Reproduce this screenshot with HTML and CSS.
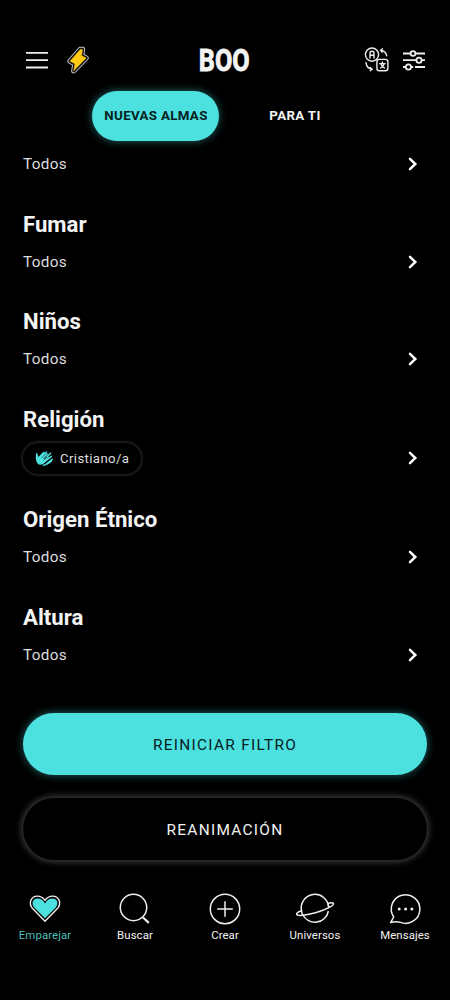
FILE: index.html
```html
<!DOCTYPE html>
<html lang="es">
<head>
<meta charset="utf-8">
<meta name="viewport" content="width=device-width, initial-scale=1">
<title>Boo</title>
<link rel="stylesheet" href="styles.css">
</head>
<body>
<svg class="defs" width="0" height="0">
  <symbol id="chevron" viewBox="0 0 12 16"><path d="M3 2.8 8.3 8 3 13.2" fill="none" stroke="#fff" stroke-width="2.5" stroke-linecap="round" stroke-linejoin="miter"/></symbol>
</svg>
<div class="app">
  <header class="topbar">
    <div class="side">
      <svg class="menu" width="24" height="30" viewBox="0 0 24 30"><path d="M1 7.8h22M1 15.2h22M1 22.5h22" stroke="#eee" stroke-width="1.8"/></svg>
      <svg class="bolt" width="26" height="30" viewBox="0 0 26 30">
        <path d="M15.2 4.4 5 16.2l4.9 2.6-1.1 7L21.2 13l-4.6-2.3.9-6.3z" fill="none" stroke="#ccc" stroke-width="5.2" stroke-linejoin="round"/>
        <path d="M15.2 4.4 5 16.2l4.9 2.6-1.1 7L21.2 13l-4.6-2.3.9-6.3z" fill="#ffc915" stroke="#0b0b0b" stroke-width="3.3" stroke-linejoin="round"/>
        <path d="M15.2 4.4 5 16.2l4.9 2.6-1.1 7L21.2 13l-4.6-2.3.9-6.3z" fill="#ffc915" stroke="#ffc915" stroke-width=".5"/>
      </svg>
    </div>
    <div class="logo">BOO</div>
    <div class="side end">
      <svg width="26" height="28" viewBox="0 0 26 28" fill="none" stroke="#eee" stroke-width="1.4" stroke-linecap="round" stroke-linejoin="round">
        <circle cx="8" cy="8.6" r="6.6"/>
        <path d="M6 12V7.2Q6 5.3 8 5.3t2 1.9V12M6 9.3h4"/>
        <rect x="12.9" y="13.4" width="11" height="11.3" rx="2.5"/>
        <path d="M15.8 17.6h5.3M18.4 16v1.6M19.9 17.8q0 2.5-3.3 4.2M17 17.8q.3 2.5 3.6 4.2"/>
        <path d="M16.5 4.2q5 .3 6.2 5.5M16.5 4.2l2-1.5M16.5 4.2l1.5 2M2 16.8q.7 5.6 6.2 6.5M8.2 23.3l-2-1.8M8.2 23.3l-1.9 1.4"/>
      </svg>
      <svg width="24" height="28" viewBox="0 0 24 28" fill="none" stroke="#eee" stroke-width="1.8">
        <path d="M1 7.5h7.6M13.4 7.5H23M1 14.2h13.5M19.6 14.2H23M1 21h2.8M9 21h2.2M13 21h10"/>
        <circle cx="11" cy="7.5" r="2.4"/><circle cx="17" cy="14.2" r="2.6"/><circle cx="6.4" cy="21" r="2.6"/>
      </svg>
    </div>
  </header>
  <nav class="tabs">
    <button class="tab active">NUEVAS ALMAS</button>
    <button class="tab">PARA TI</button>
  </nav>
  <main class="filters">
    <section class="filter"><div class="row"><span>Todos</span><svg class="chev"><use href="#chevron"/></svg></div></section>
    <section class="filter"><h2>Fumar</h2><div class="row"><span>Todos</span><svg class="chev"><use href="#chevron"/></svg></div></section>
    <section class="filter"><h2>Niños</h2><div class="row"><span>Todos</span><svg class="chev"><use href="#chevron"/></svg></div></section>
    <section class="filter"><h2>Religión</h2><div class="row chips">
      <span class="chip">
        <svg width="19" height="17" viewBox="0 0 19 17">
          <path d="M1 3.2Q2.2 2.3 2.6 4.2L3.3 7 8.2 2q1.2-.8 1.3.5l1.7-1.1q1.3-.2.9 1l-1 1.5 1.5-.6q1 .2.4 1.2L8.4 10.2l4.8-3.5q1.2 0 .7 1.1L7.6 14q-3 1.9-5.2-.8Q.8 11.2.8 8z" fill="#4ce0df"/>
          <path d="M8.5 15.2q1.6 0 2.9-1.2l5.7-4.7M7.5 13.5l8.8-7.2M12 6.7l3.5-3.4M12.4 13.9l4.1-2.8" fill="none" stroke="#4ce0df" stroke-width="1.6" stroke-linecap="round"/>
          <path d="m6.8 7.7 4-4.2M8 9l4.5-4" stroke="#0b3a3a" stroke-width=".6"/>
        </svg>
        Cristiano/a
      </span><svg class="chev"><use href="#chevron"/></svg></div></section>
    <section class="filter"><h2>Origen Étnico</h2><div class="row"><span>Todos</span><svg class="chev"><use href="#chevron"/></svg></div></section>
    <section class="filter"><h2>Altura</h2><div class="row"><span>Todos</span><svg class="chev"><use href="#chevron"/></svg></div></section>
  </main>
  <div class="actions">
    <button class="action primary">REINICIAR FILTRO</button>
    <button class="action outline">REANIMACIÓN</button>
  </div>
  <nav class="bottom">
    <a class="item current">
      <svg viewBox="0 0 40 34"><path d="M20 29.2 7.6 16.6C2.9 11.3 6.2 4.1 12.2 4.1c3.6 0 6.2 1.8 7.8 4.2 1.6-2.4 4.2-4.2 7.8-4.2 6 0 9.3 7.2 4.6 12.5z" fill="#050505" stroke="#eee" stroke-width="1.4" stroke-linejoin="round"/><path d="M20 26.3 9.2 15.4C5.8 11.2 8.2 6.6 12.3 6.6c3.5 0 6.1 1.9 7.7 4.8 1.6-2.9 4.2-4.8 7.7-4.8 4.1 0 6.5 4.6 3.1 8.8z" fill="#4ce0df" stroke="none"/></svg>
      <span>Emparejar</span></a>
    <a class="item"><svg viewBox="0 0 40 34"><circle cx="18.5" cy="15.5" r="13.2"/><path d="m28 25.5 5.8 5.4" stroke-width="2.2"/></svg><span>Buscar</span></a>
    <a class="item"><svg viewBox="0 0 40 34"><circle cx="20" cy="17" r="14.7"/><path d="M12.2 17h15.6M20 9.2v15.6"/></svg><span>Crear</span></a>
    <a class="item"><svg viewBox="0 0 40 34"><path d="M6.6 19.3A13.7 13.7 0 1 1 33.6 15.4M7.6 22.5A13.7 13.7 0 0 0 33.4 19"/><path d="M32.8 11.6c3.4-1.2 5.4-1 5.7-.1.7 2-7.1 6-17.2 9S2.2 24.3 1.6 22.3c-.3-1 1.2-2.2 4.9-3.5M6.5 18.8 7.4 22.9M33 11.8l.9 3.4"/></svg><span>Universos</span></a>
    <a class="item"><svg viewBox="0 0 40 34"><path d="M5.6 30.6 8.7 25A14.3 14.3 0 1 1 15.5 30.4Q11 29.2 5.6 30.6z" stroke-linejoin="round"/><g fill="#eee" stroke="none"><circle cx="14.2" cy="17" r="1.5"/><circle cx="20.6" cy="17" r="1.5"/><circle cx="26.9" cy="17" r="1.5"/></g></svg><span>Mensajes</span></a>
  </nav>
</div>
</body>
</html>
```
FILE: styles.css
```css
* { box-sizing: border-box; }
body { margin: 0; background: #000; color: #f3f3f3; font-family: Roboto, "Liberation Sans", sans-serif; }
.defs { display: block; }
button { border: 0; background: none; color: inherit; font: inherit; padding: 0; }
.app { width: 450px; height: 1000px; display: flex; flex-direction: column; overflow: hidden; }
.topbar { height: 91px; padding: 30px 24px 1px 25px; display: grid; grid-template-columns: 1fr auto 1fr; align-items: center; }
.side { display: flex; align-items: center; gap: 16px; }
.side.end { justify-content: flex-end; gap: 12px; }
.logo { font-size: 31.5px; line-height: 32px; font-weight: 700; transform: translate(-1.5px, 1px) scaleX(.8); -webkit-text-stroke: .9px #f3f3f3; }
.tabs { display: flex; padding-left: 92px; height: 50px; }
.tab { font-size: 13.3px; font-weight: 700; letter-spacing: .34px; width: 127px; height: 50px; padding: 0 0 1px 1px; border-radius: 25px; color: #f3f3f3; }
.tab + .tab { margin-left: 12px; width: 127px; }
.tab.active { background: #4ce0df; color: #04201f; box-shadow: 0 0 8px rgba(76, 224, 223, .45); }
.filters { padding: 8px 29px 0 23px; display: flex; flex-direction: column; gap: 30.5px; }
h2 { margin: 0 0 8px; font-size: 22.2px; line-height: 29px; font-weight: 700; }
.row { height: 30px; display: flex; align-items: center; justify-content: space-between; font-size: 15.3px; letter-spacing: .34px; color: #ddd; }
.row.chips { height: 33px; }
.chev { width: 12px; height: 16px; margin-right: 2px; }
.chip { display: flex; align-items: center; gap: 6px; height: 31px; width: 118px; padding-left: 12px; border-radius: 16px; font-size: 13.2px; letter-spacing: .38px; box-shadow: 0 0 2px 2px #1d1d1d; white-space: nowrap; }
.chip svg { flex: none; }
.actions { padding: 43.5px 23px 0; display: flex; flex-direction: column; gap: 23px; }
.action { height: 62px; padding-top: 1px; border-radius: 31px; font-size: 15.4px; letter-spacing: 1.3px; }
.primary { background: #4ce0df; color: #04201f; box-shadow: 0 0 8px rgba(76, 224, 223, .45); }
.outline { box-shadow: 0 0 6px 2px #3c3c3c; }
.bottom { margin-top: 32px; display: grid; grid-template-columns: repeat(5, 1fr); }
.item { display: flex; flex-direction: column; align-items: center; font-size: 11.4px; line-height: 19px; letter-spacing: .08px; }
.item svg { width: 40px; height: 34px; fill: none; stroke: #eee; stroke-width: 1.5; }
.item.current { color: #4cbcb5; }
```
